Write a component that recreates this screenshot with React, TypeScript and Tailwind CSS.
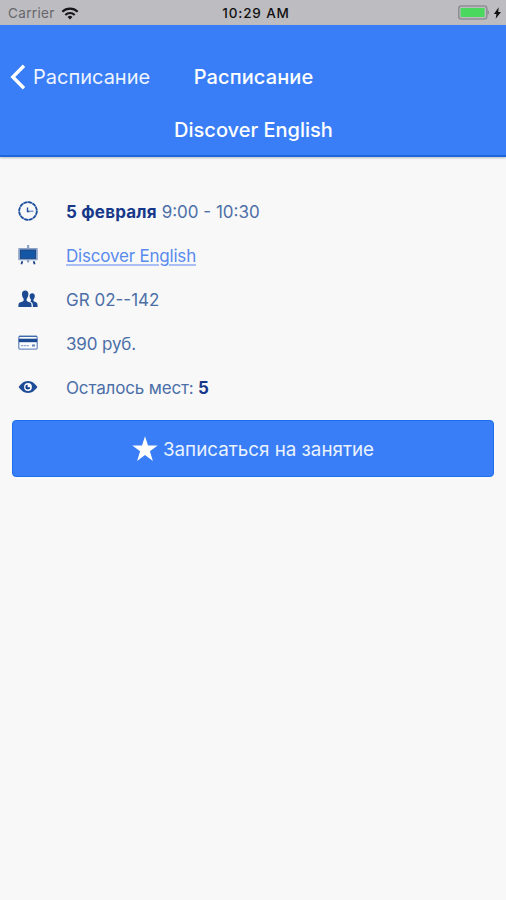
import React from 'react';

const ClockIcon = () => (
  <svg width="20" height="20" viewBox="0 0 20 20" fill="none" stroke="#1f4f9c">
    <circle cx="10" cy="10" r="8.9" stroke="#7f9cca" strokeWidth="1.6" />
    <circle cx="10" cy="10" r="8.8" strokeWidth="1.7" strokeDasharray="3.7 0.9" />
    <path d="M9.5 6.5v4h2" strokeWidth="1.4" />
    <path d="M11 10.3h4.5" stroke="#7f9cca" strokeWidth="1.5" />
  </svg>
);

const BoardIcon = () => (
  <svg width="22" height="20" viewBox="0 0 22 20">
    <path d="M10 0h2.2v3H10zM10 15h2.2v2.4H10z" fill="#8da3c6" />
    <rect x="1.2" y="3" width="19.6" height="12.2" rx="1" fill="#8ba3c9" />
    <rect x="3.4" y="5" width="15.2" height="8.4" fill="#1457a4" stroke="#17407f" strokeWidth="0.8" />
    <path d="M4.2 16.2h2l-.8 3H3.6zM15.8 16.2h2l.7 3h-1.9z" fill="#23498b" />
  </svg>
);

const PeopleIcon = () => (
  <svg width="20" height="18" viewBox="0 0 20 18" fill="#1d4993">
    <path d="M7.2.6c2 0 3.3 1.4 3.2 3.5-.1 1.9-.5 3.2-1.5 4.3-.4.5-.4 2.1 0 2.5.5.6 3.5 1.2 4.1 2.2.5.8.5 2.4.6 3.8H.4c0-1.4.1-3 .6-3.8.7-1 3.8-1.6 4.4-2.2.4-.4.4-2 0-2.5C4.5 7.3 4 6 4 4.1 3.9 2 5.2.6 7.2.6z" />
    <path d="M14.2 3.2c1.7 0 2.7 1.1 2.6 2.8-.1 1.5-.4 2.4-1.1 3.3-.4.5-.4 1.5 0 1.9.5.5 2.8.9 3.3 1.7.5.7.6 2.7.6 4h-4.7c0-1.5 0-2.9-.6-3.9-.5-.8-1.5-1.2-2.5-1.5.8-.3 1.2-.5 1.2-1.1 0-.5 0-.8-.3-1.2-.6-.8-1-1.7-1.1-3.2-.1-1.7.9-2.8 2.6-2.8z" />
  </svg>
);

const CardIcon = () => (
  <svg width="20" height="16" viewBox="0 0 20 16">
    <rect x="0.8" y="1.3" width="18.4" height="12.8" rx="1" fill="#fafcfe" stroke="#6f8fc0" strokeWidth="1.3" />
    <path d="M1 1.3h18" stroke="#3b66a9" strokeWidth="1.2" />
    <path d="M.8 3.7h18.4v3.5H.8z" fill="#1d4b91" />
    <path d="M3 10.6h2.5M6 10.6h2M8.6 10.6h2.2" stroke="#8fa7cc" strokeWidth="1.2" />
    <path d="M14 10.5h3" stroke="#6283b6" strokeWidth="2" />
  </svg>
);

const EyeIcon = () => (
  <svg width="20" height="14" viewBox="0 0 20 14">
    <path d="M10 1C5.7 1 3 3.8.6 7c2.4 3.2 5.1 6 9.4 6s7-2.8 9.4-6C17 3.8 14.3 1 10 1z" fill="#1e4c95" />
    <circle cx="10" cy="7" r="3.9" fill="#fff" />
    <path d="M9.6 4.6V7.200h2.700A2.500 2.500 0 1 1 9.600 4.600z" fill="#0e3c8d" />
  </svg>
);

const rows = [
  {
    icon: <ClockIcon />,
    content: (
      <span>
        <b className="font-bold text-[#17388a] tracking-[0.2px]">5 февраля</b> 9:00 - 10:30
      </span>
    ),
  },
  {
    icon: <BoardIcon />,
    content: (
      <a className="text-[#588bed] tracking-[-0.2px] underline decoration-[#a9bff5] decoration-2 underline-offset-2">
        Discover English
      </a>
    ),
  },
  { icon: <PeopleIcon />, content: <span>GR 02--142</span> },
  { icon: <CardIcon />, content: <span className="tracking-[-0.15px]">390 руб.</span> },
  {
    icon: <EyeIcon />,
    content: (
      <span className="tracking-[-0.16px]">
        Осталось мест: <b className="font-bold text-[#17388a]">5</b>
      </span>
    ),
  },
];

function StatusBar() {
  return (
    <div className="grid h-[25px] grid-cols-3 items-center bg-[#bdbdc1] pl-2 pr-1 text-[13.5px] text-[#111]">
      <div className="flex items-center gap-[6px] pt-px">
        <span className="text-[#66666b] tracking-[0.35px]">Carrier</span>
        <svg width="18" height="13" viewBox="0 0 18 13" fill="none" stroke="#161618" strokeWidth="2.1">
          <path d="M1.3 4.8a11 11 0 0 1 15.4 0" />
          <path d="M4.3 8a6.7 6.7 0 0 1 9.4 0" />
          <path d="M9 12.4 6.6 10a3.4 3.4 0 0 1 4.8 0z" fill="#161618" stroke="none" />
        </svg>
      </div>
      <div className="whitespace-nowrap pt-[2px] pl-[2px] text-center font-medium tracking-[0.85px]">10:29 AM</div>
      <div className="flex items-center justify-end gap-[3px]">
        <svg width="32" height="15" viewBox="0 0 32 15">
          <rect x="0.8" y="1" width="28" height="13" rx="2.5" fill="#bdbdc1" stroke="#909094" strokeWidth="1.6" />
          <path d="M29.5 5c2.200 1 2.200 4 0 5z" fill="#909094" />
          <rect x="2.600" y="3" width="24" height="9" rx="0.5" fill="#4bd85e" />
        </svg>
        <svg width="9" height="12" viewBox="0 0 8 12" fill="#111">
          <path d="M5.200.3.4 6.900h2.500L2.200 11.700 7.500 4.900H4.700z" />
        </svg>
      </div>
    </div>
  );
}

export default function App() {
  return (
    <div className="h-[900px] w-[506px] overflow-hidden bg-[#f8f8f8] font-['Inter','Liberation_Sans',sans-serif]">
      <StatusBar />

      <header className="h-[132px] border-b-2 border-[#1c67dd] bg-[#397ef6] pt-[25px] text-white shadow-[0_1px_2px_rgba(0,0,0,0.25)]">
        <div className="grid h-[53px] grid-cols-[1fr_122px_1fr] items-center text-[20px]">
          <button className="flex items-center gap-[7px] pl-[10px] text-[#edf4ff]">
            <svg width="16" height="26" viewBox="0 0 16 26" fill="none" stroke="#fff" strokeWidth="3.4">
              <path d="M14 1.8 2.8 13 14 24.2" />
            </svg>
            <span>Расписание</span>
          </button>
          <h1 className="whitespace-nowrap pl-px text-center font-medium tracking-[0.1px]">Расписание</h1>
        </div>
        <h2 className="h-[54px] pl-px text-center text-[20px] leading-[54px] font-medium">Discover English</h2>
      </header>

      <main className="px-3 pt-[33px]">
        <ul>
          {rows.map((row, i) => (
            <li key={i} className="flex h-11 items-center text-[17px] text-[#4c6fa8]">
              <div className="ml-[5px] flex w-[22px] justify-center pb-[2px]">{row.icon}</div>
              <div className="ml-[27px] whitespace-nowrap pt-[2px]">{row.content}</div>
            </li>
          ))}
        </ul>

        <button className="mt-[10px] flex h-[57px] w-full items-center justify-center gap-[5px] rounded-[4px] border border-[#1d70ec] bg-[#397ef6] text-[18.8px] text-[#eaf2ff]">
          <svg width="26" height="26" viewBox="0 0 26 26" fill="#fff">
            <path d="M13 .3 16 9.5h9.700l-7.800 5.800 3 9.600-7.900-5.900-7.900 5.900 3-9.600L.3 9.500H10z" />
          </svg>
          <span className="pt-[3px]">Записаться на занятие</span>
        </button>
      </main>
    </div>
  );
}
